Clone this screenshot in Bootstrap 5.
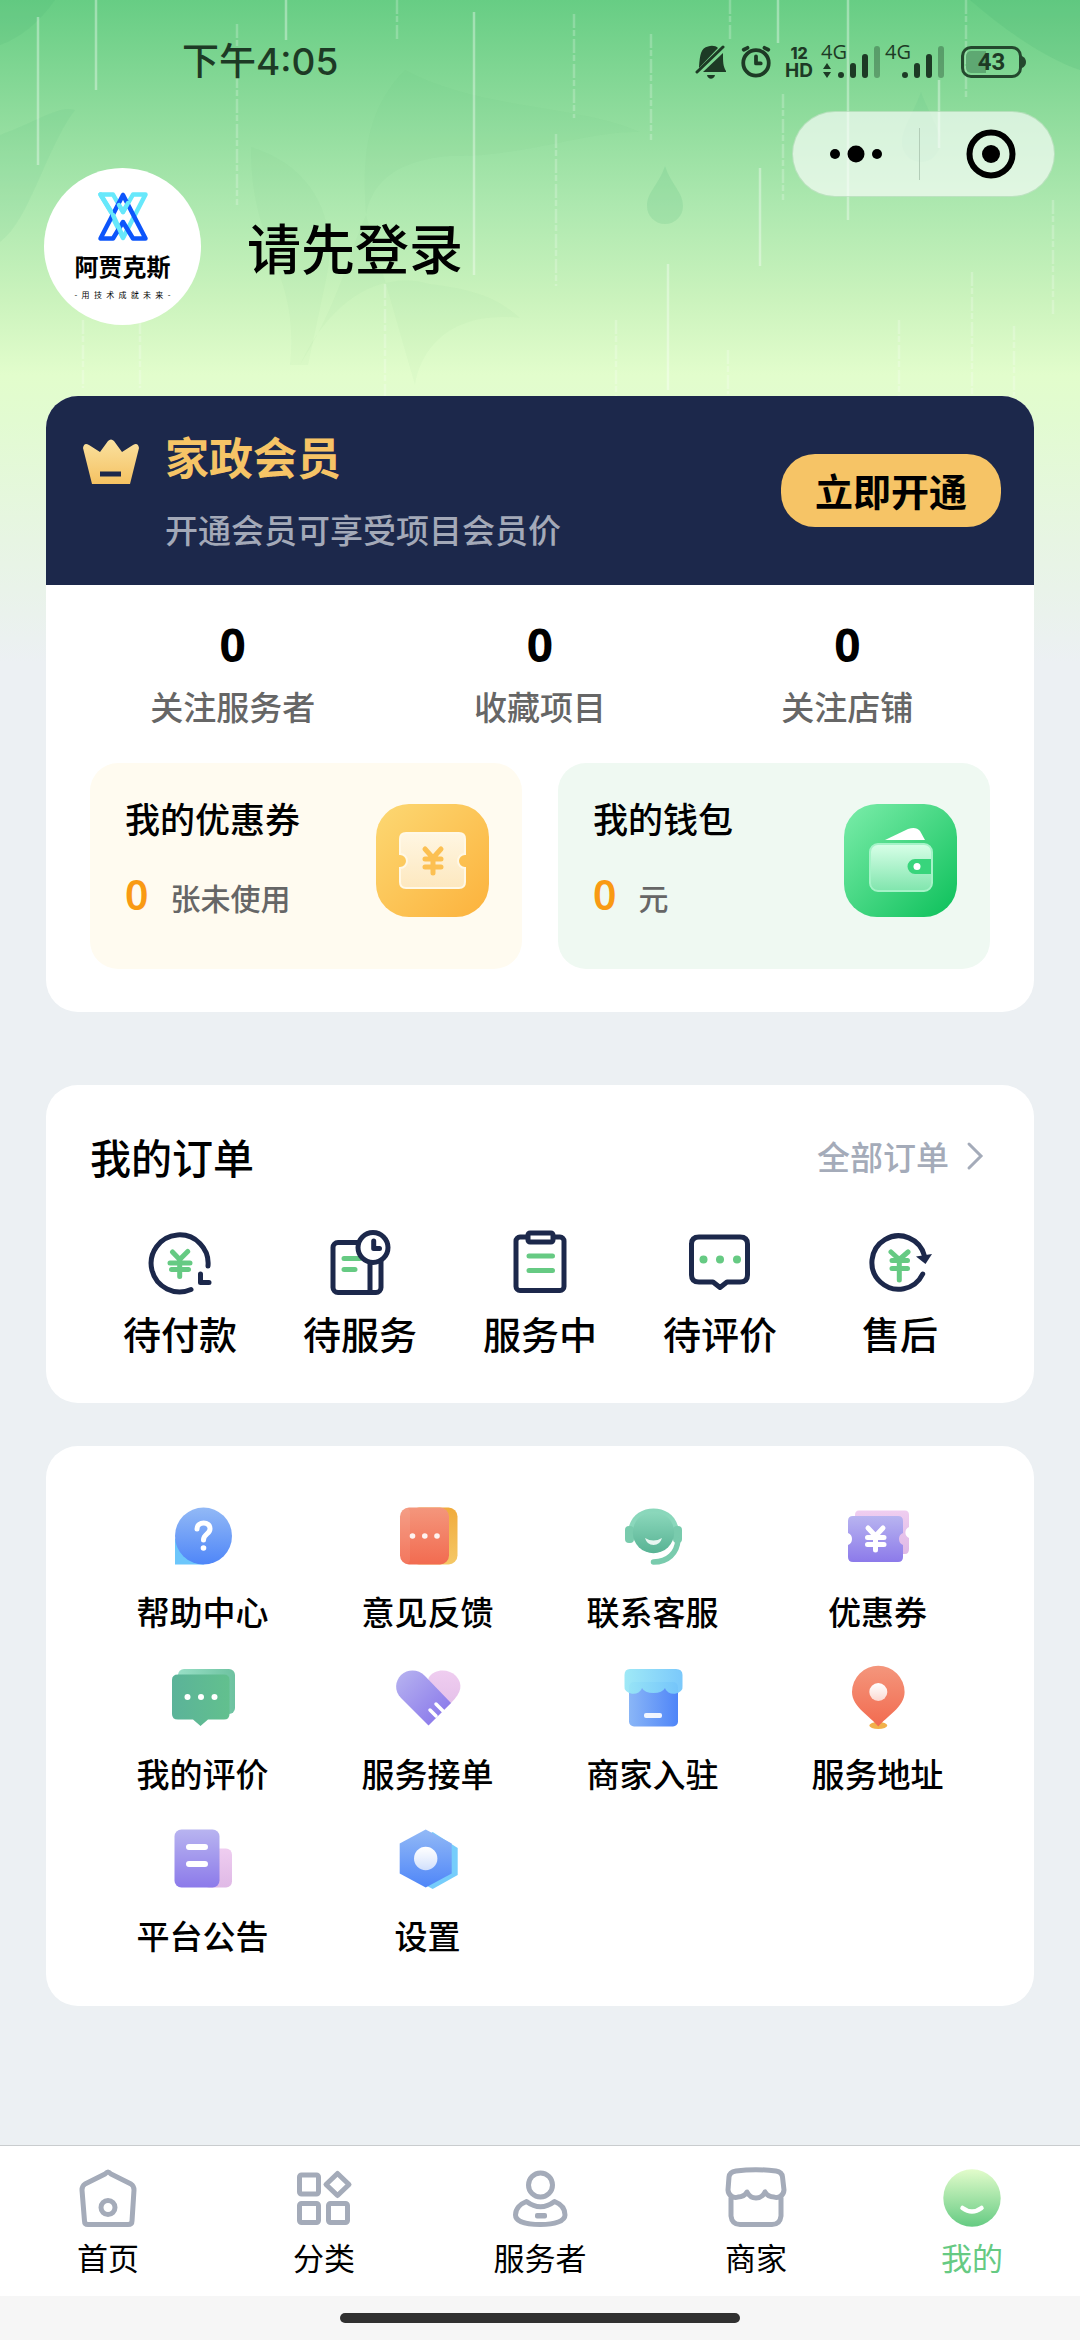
<!DOCTYPE html>
<html lang="zh-CN">
<head>
<meta charset="utf-8">
<meta name="viewport" content="width=device-width, initial-scale=1">
<title>我的</title>
<link href="https://cdn.jsdelivr.net/npm/bootstrap@5.3.0/dist/css/bootstrap.min.css" rel="stylesheet">
<style>
  body { font-family: "Noto Sans CJK SC", "Noto Sans", sans-serif; background: #ecf0f3; color: #000; font-weight: 500; }
  a { color: inherit; text-decoration: none; }
  svg { display: block; flex: none; }
  .page { background: linear-gradient(180deg, #67cd84 0, #8ddb9b 110px, #ade8af 205px, #cbf3bd 300px, #e2fdcc 375px, #e2fbd1 420px, #e7f5e3 540px, #ecf0f3 662px) no-repeat; }
  .rain { top: 0; left: 0; width: 100%; height: 400px; }
  .status { height: 124px; padding: 0 54px 0 182px; color: #1d3a25; }
  .clock { font: 500 37px/40px Inter, "Noto Sans CJK SC", sans-serif; }
  .hd { font: 700 19px/17px Inter, sans-serif; }
  .hd small { font-size: 16px; font-weight: 800; display: block; }
  .net { font: 500 20px/16px "Open Sans", sans-serif; }
  .batt { width: 61px; height: 32px; border: 3px solid #24482e; border-radius: 10px; font: 700 24px/26px Roboto, sans-serif; background: linear-gradient(90deg, #5ea872 40%, transparent 40%) content-box; padding: 2px; }
  .capsule { top: 111px; right: 25px; width: 263px; height: 86px; border-radius: 43px; background: rgba(255,255,255,.64); border: 1px solid rgba(120,190,130,.35); }
  .capsule button { flex: 1; border: 0; background: none; padding: 0; display: flex; align-items: center; justify-content: center; }
  .capsule .sep { width: 1px; height: 52px; background: #b3cdb8; }
  .profile { padding: 44px 44px 71px; gap: 46px; }
  .avatar { width: 157px; height: 157px; background: #fff; padding-top: 23px; }
  .brand { font-size: 24px; line-height: 30px; font-weight: 700; margin-top: 8px; }
  .motto { font-size: 8px; line-height: 12px; width: 96px; margin-top: 8px; font-weight: 400; }
  .login { font-size: 54px; line-height: 78px; }
  .panel { margin: 0 46px; border-radius: 32px; background: #fff; overflow: hidden; }
  .vip { background: #1c284b; height: 189px; padding: 0 33px 0 37px; }
  .vip-crown { margin-top: 43px; }
  .vip-text { margin: 30px 0 0 26px; }
  .vip-title { font-size: 44px; line-height: 60px; font-weight: 700; color: #f6c466; }
  .vip-sub { font-size: 33px; line-height: 50px; margin-top: 18px; color: #a3a9b8; }
  .vip-btn { height: 73px; border: 0; border-radius: 34px; background: #f6c466; color: #000; font-size: 38px; line-height: 48px; font-weight: 700; padding: 0 34px 2px; }
  .stats { padding: 29px 33px 34px; }
  .num { font: 700 46px/60px "Noto Sans", sans-serif; }
  .cap { font-size: 33px; line-height: 46px; margin-top: 9px; color: #666; }
  .boxes { padding: 0 44px 43px; gap: 36px; }
  .tile { height: 206px; border-radius: 28px; padding: 0 33px 0 35px; }
  .tile-gold { background: #fffbf0; }
  .tile-green { background: #eff9f2; }
  .tile-text { padding-top: 30px; }
  .tile-icon { margin-top: 41px; }
  .tile-title { font-size: 35px; line-height: 50px; }
  .tile-row { gap: 22px; margin-top: 26px; line-height: 50px; font-size: 30px; color: #666; }
  .tile-num { font: 600 41px/50px "Noto Sans", sans-serif; color: #f99a13; }
  .orders { margin-top: 73px; padding: 46px 44px 45px; }
  .sec-title { font-size: 41px; line-height: 50px; }
  .more { font-size: 33px; line-height: 50px; color: #a4abb9; padding-right: 5px; gap: 16px; }
  .order-row { margin-top: 46px; }
  .order-row span { font-size: 38px; line-height: 50px; margin-top: 11px; }
  .services { margin-top: 43px; padding: 54px 44px 46px; }
  .services .row { row-gap: 26px; }
  .services span { font-size: 33px; line-height: 46px; margin-top: 18px; }
  .services a, .order-row a { padding: 0; display: flex; flex-direction: column; align-items: center; }
  .services a { height: 136px; }
  .tabs { background: #fff; border-top: 1px solid #c9ccce; padding: 17px 0; height: 151px; }
  .tabs a { display: flex; flex-direction: column; align-items: center; font-weight: 400; }
  .tabs span { font-size: 31px; line-height: 40px; margin-top: 4px; }
  .tabs .on { color: #66ca83; }
  .gesture { background: #f6f6f6; height: 44px; }
  .gesture div { width: 37%; height: 10px; border-radius: 5px; background: #303030; }
  .ln { fill: none; stroke: #1c284b; stroke-width: 5; stroke-linecap: round; stroke-linejoin: round; }
  .gn { fill: none; stroke: #66ca83; stroke-width: 5; stroke-linecap: round; stroke-linejoin: round; }
  .gy { fill: none; stroke: #a4abb9; stroke-width: 5; stroke-linecap: round; stroke-linejoin: round; }
  .wt { fill: none; stroke: #fff; stroke-width: 5; stroke-linecap: round; stroke-linejoin: round; }
</style>
<script src="https://cdn.jsdelivr.net/npm/bootstrap@5.3.0/dist/js/bootstrap.bundle.min.js"></script>
</head>
<body>
<svg width="0" height="0" class="position-absolute" aria-hidden="true">
  <defs>
    <linearGradient id="blue" x2="0" y2="1"><stop stop-color="#92b9f6"/><stop offset="1" stop-color="#4f86f8"/></linearGradient>
    <linearGradient id="blueH"><stop stop-color="#8ab6f7"/><stop offset="1" stop-color="#4f85f8"/></linearGradient>
    <linearGradient id="cyan"><stop stop-color="#9ae8f6"/><stop offset="1" stop-color="#74c6fb"/></linearGradient>
    <linearGradient id="red" x2="0" y2="1"><stop stop-color="#f4967c"/><stop offset="1" stop-color="#f26b50"/></linearGradient>
    <linearGradient id="amber" x2="0" y2="1"><stop stop-color="#f0ab3c"/><stop offset="1" stop-color="#f5c866"/></linearGradient>
    <linearGradient id="teal" x2="0" y2="1"><stop stop-color="#8cd8bc"/><stop offset="1" stop-color="#58b394"/></linearGradient>
    <linearGradient id="tealH"><stop stop-color="#5bb399"/><stop offset="1" stop-color="#62c08e"/></linearGradient>
    <linearGradient id="tealBack"><stop stop-color="#98dfc6"/><stop offset="1" stop-color="#6dc2a0"/></linearGradient>
    <linearGradient id="violet" x2="0" y2="1"><stop stop-color="#b8b4f0"/><stop offset="1" stop-color="#8c7aea"/></linearGradient>
    <linearGradient id="violetD" x2="1" y2="1"><stop stop-color="#b8b4f0"/><stop offset="1" stop-color="#8471ea"/></linearGradient>
    <linearGradient id="pink" x2="0" y2="1"><stop stop-color="#efcdf0"/><stop offset="1" stop-color="#dfb9e6"/></linearGradient>
    <linearGradient id="fade" x2="0" y2="1"><stop stop-color="#fff"/><stop offset="1" stop-color="#fff" stop-opacity=".7"/></linearGradient>
    <linearGradient id="face" x2="0" y2="1"><stop stop-color="#e2fccb"/><stop offset="1" stop-color="#66cb83"/></linearGradient>
    <linearGradient id="gold" x2="1" y2="1"><stop stop-color="#fcd873"/><stop offset="1" stop-color="#fcb23c"/></linearGradient>
    <linearGradient id="ticket" x2="0" y2="1"><stop stop-color="#fff6e2"/><stop offset="1" stop-color="#fde8bf"/></linearGradient>
    <linearGradient id="green" x2="1" y2="1"><stop stop-color="#7cedaa"/><stop offset="1" stop-color="#0cc05a"/></linearGradient>
    <linearGradient id="purse" x2="0" y2="1"><stop stop-color="#d8ffe8"/><stop offset="1" stop-color="#80e5ad"/></linearGradient>
    <linearGradient id="crown" x2="0" y2="1"><stop stop-color="#fae1a0"/><stop offset="1" stop-color="#f5c262"/></linearGradient>
  </defs>
</svg>

<div class="page position-relative d-flex flex-column min-vh-100">
  <svg class="rain position-absolute" viewBox="0 0 1080 400" preserveAspectRatio="none" aria-hidden="true">
    <g fill="#3cab6c" fill-opacity=".03">
      <path d="M405 70C365 110 362 160 366 215C372 180 400 160 450 156C520 158 590 130 640 132C580 105 480 110 405 70Z"/>
      <path d="M251 147C310 165 340 215 326 280L308 365H290C300 270 250 250 251 147Z"/>
      <path d="M366 215C350 250 340 300 300 365C330 300 380 270 430 284C480 290 500 300 520 318C450 310 420 350 415 385"/>
      <path d="M970 0C1010 35 1050 60 1080 70V0Z" fill-opacity=".14"/>
      <path d="M0 0H55C40 22 20 38 0 45Z" fill-opacity=".1"/>
      <path d="M0 135C40 120 60 105 75 110C45 150 30 220 0 242Z" fill-opacity=".07"/>
    </g>
    <g fill="#5dbd84" fill-opacity=".2">
      <path d="M665 166C672 186 683 192 683 206A18 18 0 0 1 647 206C647 192 658 186 665 166Z"/>
      <path d="M921 92C928 112 940 128 940 143A19 19 0 0 1 902 143C902 128 914 112 921 92Z" fill-opacity=".14"/>
    </g>
    <g stroke="#fff" stroke-opacity=".36" stroke-width="2.5">
      <path d="M38 17V165M96 0V90M286 0V40M474 12V275M778 0V43M848 0V220M939 80V148M668 264V390M760 168V266"/>
      <path stroke-opacity=".22" stroke-dasharray="14 2 6 3" d="M237 24V205M397 0V40M574 14V118M556 134V286M651 34V140M730 0V40M966 0V100M783 94V200M385 284V400M83 320V388M140 320V388M616 320V398M972 272V400M1053 200V314M899 320V398M1014 326V396M728 350V394"/>
    </g>
  </svg>

  <header class="position-relative">
    <div class="status d-flex align-items-center justify-content-between">
      <div class="clock">下午4:05</div>
      <div class="d-flex align-items-center">
        <svg width="32" height="36" viewBox="0 0 32 36" fill="currentColor"><path d="M4 23C5 10 6 4 13 2.500C17 1 21 2 23 4L4 24ZM8 28L28 9C28 18 28 22 31 27V28ZM12 31H20C19 36 13 36 12 31Z"/><path d="M2 28L28 3" stroke="currentColor" stroke-width="3" stroke-linecap="round"/></svg>
        <svg class="ms-2 ps-1" width="38" height="36" viewBox="-2 0 36 36" fill="none" stroke="currentColor" stroke-width="4" stroke-linecap="round" stroke-linejoin="round"><circle cx="16" cy="19" r="13.500"/><path d="M16 12V19.500H21M3 5L7 3M29 5L25 3"/></svg>
        <div class="hd ms-2 ps-1 text-center"><small>12</small>HD</div>
        <div class="ms-2 position-relative"><span class="net position-absolute">4G</span>
          <svg width="60" height="36" viewBox="0 0 60 36"><g stroke="currentColor" stroke-width="6" stroke-linecap="round"><path d="M20 31V31.100M32 22V31M44 13V31"/><path d="M56 5V31" stroke-opacity=".35"/></g><path d="M2 25L6 19L10 25ZM2 28H10L6 34Z" fill="currentColor"/></svg></div>
        <div class="ms-1 position-relative"><span class="net position-absolute">4G</span>
          <svg width="60" height="36" viewBox="0 0 60 36"><g stroke="currentColor" stroke-width="6" stroke-linecap="round"><path d="M20 31V31.100M32 22V31M44 13V31"/><path d="M56 5V31" stroke-opacity=".35"/></g></svg></div>
        <div class="batt ms-3 d-flex align-items-center justify-content-center">43</div>
        <svg width="4" height="12"><path d="M0 0Q4 2 4 6Q4 10 0 12Z" fill="#24482e"/></svg>
      </div>
    </div>
    <div class="profile d-flex align-items-center">
      <div class="avatar rounded-circle d-flex flex-column align-items-center">
        <svg width="52" height="52" viewBox="0 0 52 52" fill="none" stroke-width="4.500" stroke-linejoin="round" stroke-linecap="round">
          <path stroke="#67e8fb" d="M15 22L3.500 3.500H16L26 21L36 3.500H48.500L26 47L15 25"/>
          <path stroke="#0d55fb" d="M26 4L3.500 47.500H16L26 31L36 47.500H48.500L26 4"/>
          <path stroke="#67e8fb" d="M16 24L26 46M3.500 3.500L14 21M31 12L26 21L22 14"/>
        </svg>
        <div class="brand">阿贾克斯</div>
        <div class="motto d-flex justify-content-between"><span>-</span><span>用</span><span>技</span><span>术</span><span>成</span><span>就</span><span>未</span><span>来</span><span>-</span></div>
      </div>
      <a href="#" class="login">请先登录</a>
    </div>
    <div class="capsule position-absolute d-flex align-items-center">
      <button type="button" aria-label="更多"><svg width="52" height="18"><circle cx="5" cy="9" r="5"/><circle cx="26" cy="9" r="8.500"/><circle cx="47" cy="9" r="5"/></svg></button>
      <div class="sep"></div>
      <button type="button" class="ps-2" aria-label="关闭"><svg width="50" height="50"><circle cx="25" cy="25" r="21.500" fill="none" stroke="#000" stroke-width="6"/><circle cx="25" cy="25" r="9"/></svg></button>
    </div>
  </header>

  <main class="position-relative">
    <section class="panel">
      <div class="vip d-flex">
        <svg class="vip-crown" width="56" height="46" viewBox="0 0 56 46"><path fill="url(#crown)" d="M9 45L0 9Q1 3 6 6L17 13L25 2Q28 -1 31 2L39 13L50 6Q55 3 56 9L47 45Z"/><path d="M17 35H38" stroke="#1c284b" stroke-width="5"/></svg>
        <div class="vip-text flex-grow-1">
          <div class="vip-title">家政会员</div>
          <div class="vip-sub">开通会员可享受项目会员价</div>
        </div>
        <button type="button" class="vip-btn align-self-center">立即开通</button>
      </div>
      <div class="stats d-flex text-center">
        <a href="#" class="col"><div class="num">0</div><div class="cap">关注服务者</div></a>
        <a href="#" class="col"><div class="num">0</div><div class="cap">收藏项目</div></a>
        <a href="#" class="col"><div class="num">0</div><div class="cap">关注店铺</div></a>
      </div>
      <div class="boxes d-flex">
        <a href="#" class="tile tile-gold col d-flex justify-content-between">
          <div class="tile-text"><div class="tile-title">我的优惠券</div><div class="tile-row d-flex align-items-baseline"><span class="tile-num">0</span><span>张未使用</span></div></div>
          <svg class="tile-icon" width="113" height="113"><rect width="113" height="113" rx="33" fill="url(#gold)"/><path fill="url(#ticket)" stroke="#fff8e6" stroke-width="2" d="M30 29H83Q89 29 89 35V50A7 7 0 0 0 89 64V78Q89 84 83 84H30Q24 84 24 78V64A7 7 0 0 0 24 50V35Q24 29 30 29Z"/><path d="M49 45L57 54L65 45M49 55H65M49 63H65M57 55V69" fill="none" stroke="#fcc052" stroke-width="5" stroke-linecap="round"/></svg>
        </a>
        <a href="#" class="tile tile-green col d-flex justify-content-between">
          <div class="tile-text"><div class="tile-title">我的钱包</div><div class="tile-row d-flex align-items-baseline"><span class="tile-num">0</span><span>元</span></div></div>
          <svg class="tile-icon" width="113" height="113"><rect width="113" height="113" rx="33" fill="url(#green)"/><path d="M41 36L64 25Q72 22 76 27L81 36Z" fill="#fff"/><rect x="26" y="40" width="62" height="47" rx="8" fill="url(#purse)" stroke="#a5f3c8" stroke-width="2"/><path d="M87 55H71A7.500 7.500 0 0 0 71 70H87Z" fill="#38d57c"/><circle cx="73" cy="62.500" r="3.500" fill="#fff"/></svg>
        </a>
      </div>
    </section>

    <section class="panel orders">
      <div class="d-flex justify-content-between">
        <div class="sec-title">我的订单</div>
        <a href="#" class="more d-flex align-items-center">全部订单<svg width="20" height="30" viewBox="0 0 20 30"><path d="M4 3L16 15L4 27" fill="none" stroke="#a4abb9" stroke-width="3" stroke-linecap="round"/></svg></a>
      </div>
      <div class="order-row d-flex">
        <a href="#" class="col"><svg width="70" height="70"><path class="ln" d="M63 39A28.500 28.500 0 1 0 46 62.500M55.500 47V55.500H64"/><path class="gn" d="M27.500 25L34.700 32.500L42.700 24.500M25 36H45M26.500 42.500H43.500M34.700 33V49.500"/></svg><span>待付款</span></a>
        <a href="#" class="col"><svg width="70" height="70"><rect class="ln" x="8" y="15.500" width="48" height="50" rx="5"/><path class="ln" d="M45 36V65"/><path class="gn" d="M19 31.500H35M19 42.500H30"/><circle class="ln" cx="48" cy="20.500" r="15" style="fill:#fff"/><path class="ln" d="M48.700 14V21.500H54.500"/></svg><span>待服务</span></a>
        <a href="#" class="col"><svg width="70" height="70"><rect class="ln" x="11" y="10" width="48" height="53.500" rx="4"/><rect class="ln" x="23" y="6" width="25" height="9" rx="2" style="fill:#fff"/><path class="gn" d="M24 29H47.500M24 43.500H47.500"/></svg><span>服务中</span></a>
        <a href="#" class="col"><svg width="70" height="70"><path class="ln" d="M14 10H55Q62.500 10 62.500 17V48Q62.500 55 55 55H42L35 60.500L28 55H14Q6.500 55 6.500 48V17Q6.500 10 14 10Z"/><g fill="#66ca83"><circle cx="18.500" cy="32.500" r="4"/><circle cx="35" cy="32.500" r="4"/><circle cx="52" cy="32.500" r="4"/></g></svg><span>待评价</span></a>
        <a href="#" class="col"><svg width="70" height="70"><path class="ln" d="M57.700 47A26.700 26.700 0 1 1 59.500 29"/><path d="M51 29.500L67 27L60.500 37Z" fill="#1c284b"/><path class="gn" d="M26 25L34.300 32.500L43 25M27 33.500H42.500M27 41.500H42.500M34.300 33V53"/></svg><span>售后</span></a>
      </div>
    </section>

    <section class="panel services">
      <div class="row g-0">
        <a href="#" class="col-3"><svg width="70" height="70"><path d="M7 38V64.500H36Z" fill="#6cc6fb"/><circle cx="35.500" cy="36" r="28.500" fill="url(#blue)"/><path class="wt" d="M29 29C29 21 42.500 21 42 29C42 34 35.500 34 35.500 40"/><circle cx="35.500" cy="48" r="2.800" fill="#fff"/></svg><span>帮助中心</span></a>
        <a href="#" class="col-3"><svg width="70" height="70"><rect x="17" y="7.500" width="47.500" height="57" rx="9" fill="url(#amber)"/><rect x="7" y="7.500" width="49" height="57" rx="9" fill="url(#red)"/><rect x="7" y="7.500" width="10" height="57" rx="5" fill="#fff" fill-opacity=".08"/><g fill="#fff" fill-opacity=".9"><circle cx="19.500" cy="36" r="2.800"/><circle cx="31.800" cy="36" r="2.800"/><circle cx="44" cy="36" r="2.800"/></g></svg><span>意见反馈</span></a>
        <a href="#" class="col-3"><svg width="70" height="70"><path d="M10 34C10 0 61 0 61 34Z" fill="#8ad7bb"/><rect x="7" y="26" width="9" height="17" rx="4" fill="#79cbad"/><rect x="55" y="26" width="9" height="17" rx="4" fill="#79cbad"/><path d="M60 40C59 53 50 62 35.500 62" fill="none" stroke="#79cbad" stroke-width="5.500" stroke-linecap="round"/><circle cx="35.500" cy="32.500" r="20.700" fill="url(#teal)"/><path d="M27 38Q35.500 43 44 38Q42 45 35.500 45Q29 45 27 38Z" fill="#fff" fill-opacity=".85"/></svg><span>联系客服</span></a>
        <a href="#" class="col-3"><svg width="70" height="70"><path d="M16 10.500H62Q66 10.500 66 15V27A6 6 0 0 0 66 38V49Q66 54 62 54H12V15Q12 10.500 16 10.500Z" fill="url(#pink)"/><path d="M10 16H55Q60 16 60 21V33A6.500 6.500 0 0 0 60 45V57Q60 62 55 62H10Q5 62 5 57V45A6.500 6.500 0 0 0 5 33V21Q5 16 10 16Z" fill="url(#violet)"/><path class="wt" d="M25 28L32.500 36L40 28M24.500 37.500H41M24.500 44.500H41M32.500 37V50"/></svg><span>优惠券</span></a>
        <a href="#" class="col-3"><svg width="70" height="70"><rect x="10" y="7" width="57" height="45" rx="6" fill="url(#tealBack)"/><path d="M10 12.500H56Q61.500 12.500 61.500 18V52Q61.500 57.500 56 57.500H40L32.500 64L25 57.500H10Q4 57.500 4 52V18Q4 12.500 10 12.500Z" fill="url(#tealH)"/><g fill="#fff"><circle cx="19.500" cy="35" r="3"/><circle cx="33" cy="35" r="3"/><circle cx="46.500" cy="35" r="3"/></g></svg><span>我的评价</span></a>
        <a href="#" class="col-3"><svg width="70" height="70"><path d="M35.500 16C42 6 56 7 63 14C70 22 69 30 58 41L35.500 63Z" fill="url(#pink)"/><path d="M58 41L35.500 63.500L8 36C1 29 2 19 8 13C15 7 25 7 32 14Z" fill="url(#violetD)"/><path d="M43 42L50 49M37 48L43 54" stroke="#fff" stroke-width="3.500" stroke-linecap="round"/></svg><span>服务接单</span></a>
        <a href="#" class="col-3"><svg width="70" height="70"><rect x="11" y="20" width="49" height="44.500" rx="5" fill="url(#blueH)"/><path d="M12 7H58Q64.500 7 64.500 13V24A8.500 6.500 0 0 1 47 26A12 7 0 0 1 24 26A8.500 6.500 0 0 1 6.500 24V13Q6.500 7 12 7Z" fill="url(#cyan)" fill-opacity=".95"/><rect x="26" y="51" width="18" height="5" rx="2" fill="#fff" fill-opacity=".9"/></svg><span>商家入驻</span></a>
        <a href="#" class="col-3"><svg width="70" height="70"><ellipse cx="35.300" cy="63.500" rx="9" ry="3.500" fill="#f1b14b"/><path d="M35.300 64.500C28 55 9 45 9 30A26.300 26.300 0 0 1 61.600 30C61.600 45 43 55 35.300 64.500Z" fill="url(#red)"/><circle cx="35.300" cy="30" r="9" fill="url(#fade)"/></svg><span>服务地址</span></a>
        <a href="#" class="col-3"><svg width="70" height="70"><rect x="35" y="24.500" width="29" height="39" rx="6" fill="url(#pink)"/><rect x="6.500" y="5.500" width="45" height="58" rx="7" fill="url(#violet)"/><path d="M21 23H37M21 40H37" stroke="#fff" stroke-width="6" stroke-linecap="round"/></svg><span>平台公告</span></a>
        <a href="#" class="col-3"><svg width="70" height="70"><path d="M39.700 8L64.700 24V51L39.700 65L14 51V24Z" fill="#76cdfb"/><path d="M32.700 5.500L58.700 19.500V49.500L32.700 63.500L6.700 49.500V19.500Z" fill="url(#blue)"/><circle cx="32.700" cy="34.500" r="11.700" fill="url(#fade)"/></svg><span>设置</span></a>
      </div>
    </section>
  </main>

  <footer class="mt-auto position-relative">
    <nav class="tabs d-flex">
      <a href="#" class="col"><svg width="70" height="70"><path class="gy" d="M35 9Q36 9 38 11L58 21Q61 23 61 27L59 58Q59 61.500 55 61.500H15Q11.500 61.500 11.500 58L9 27Q9 23 12 21L32 11Q34 9 35 9Z"/><circle class="gy" cx="35" cy="44.500" r="7"/></svg><span>首页</span></a>
      <a href="#" class="col"><svg width="70" height="70"><g class="gy"><rect x="10.500" y="12" width="19" height="19" rx="2"/><rect x="10.500" y="40.500" width="19" height="19" rx="2"/><rect x="39.500" y="40.500" width="19" height="19" rx="2"/><path d="M48.500 10.500L60 21.500L48.500 32.500L37 21.500Z"/></g></svg><span>分类</span></a>
      <a href="#" class="col"><svg width="70" height="70"><circle class="gy" cx="35.500" cy="22" r="12"/><path class="gy" d="M21.500 38.500Q35.500 49 49.500 38.500C56 41 60 46 60 52C60 58 50 61.500 35.500 61.500C20 61.500 10.500 58 10.500 52C10.500 46 15 41 21.500 38.500Z"/><rect x="30" y="50" width="12" height="5.500" rx="2" fill="#a4abb9"/></svg><span>服务者</span></a>
      <a href="#" class="col"><svg width="70" height="70"><path class="gy" d="M15 8Q35 5.500 55 8Q61 9 61.500 14L63 27A7.500 8 0 0 1 53 34Q47 34 44 29Q41 35 35 35Q29 35 26 29Q23 34 17 34A7.500 8 0 0 1 7 27L8 14Q8.500 9 15 8ZM10 35V53Q11 61.500 19 61.500H51Q59 61.500 60 53V35"/></svg><span>商家</span></a>
      <a href="#" class="col on"><svg width="70" height="70"><circle cx="35" cy="35" r="28.700" fill="url(#face)"/><path d="M25.500 45Q35 52 44.500 45" fill="none" stroke="#fff" stroke-width="4.500" stroke-linecap="round"/></svg><span>我的</span></a>
    </nav>
    <div class="gesture d-flex align-items-center justify-content-center"><div></div></div>
  </footer>
</div>
</body>
</html>
